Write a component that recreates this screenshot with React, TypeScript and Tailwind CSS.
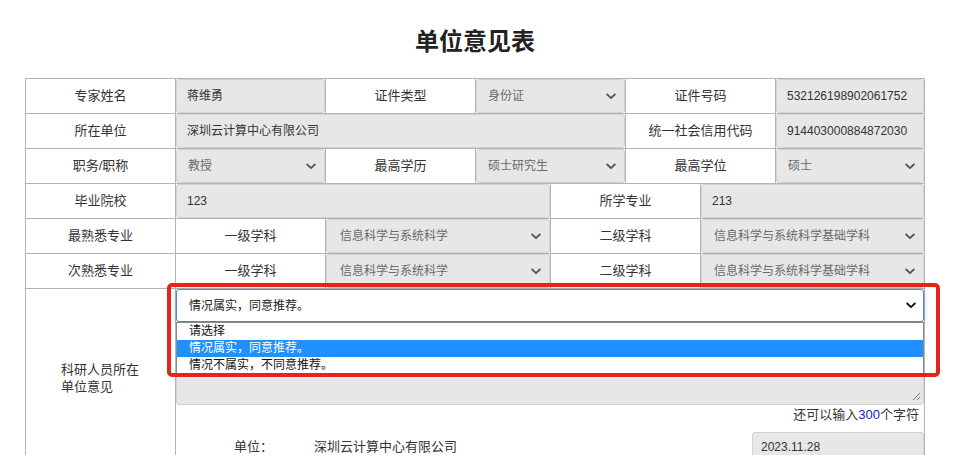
import React from 'react';

const Chevron: React.FC<{ dark?: boolean }> = ({ dark }) => (
  <svg width="10" height="7" viewBox="0 0 10 7" className="shrink-0">
    <path d="M1.2 1.5L5 5.2 8.8 1.5" fill="none" stroke={dark ? '#111' : '#555'} strokeWidth="1.8" strokeLinecap="round" strokeLinejoin="round" />
  </svg>
);

const cellBase = 'border-r border-b border-[#b4b4b4]';

const Label: React.FC<{ text: string; span: string }> = ({ text, span }) => (
  <div className={`${span} ${cellBase} flex items-center justify-center text-[13px] text-[#333]`}>{text}</div>
);

const Input: React.FC<{ value: string; span: string }> = ({ value, span }) => (
  <div className={`${span} ${cellBase}`}>
    <div className="h-full w-full flex items-center rounded-[3px] border border-[#d2d2d2] bg-[#e7e7e7] pl-[10px] text-[12px] text-[#333]">
      {value}
    </div>
  </div>
);

const Select: React.FC<{ value: string; span: string; pad?: string }> = ({ value, span, pad }) => (
  <div className={`${span} ${cellBase}`}>
    <div className={`h-full w-full flex items-center justify-between rounded-[3px] border border-[#d2d2d2] bg-[#e7e7e7] ${pad ?? 'pl-[11px]'} pr-[8px] text-[12px] text-[#6a6a6a]`}>
      <span>{value}</span>
      <Chevron />
    </div>
  </div>
);

const App: React.FC = () => {
  return (
    <div className="min-h-screen bg-white font-['Liberation_Sans','Noto_Sans_CJK_SC',sans-serif] pt-[24px]">
      <div className="ml-[25px] w-[900px]">
        <h1 className="h-[32px] leading-[32px] text-center text-[24px] font-bold text-[#222] font-['Noto_Sans_CJK_SC',sans-serif]">单位意见表</h1>
      </div>

      <div className="ml-[25px] mt-[22px] w-[900px] border-l border-t border-[#b4b4b4] grid grid-cols-[repeat(11,75px)_74px] grid-rows-[repeat(6,35px)_179px]">
        {/* row 1 */}
        <Label span="col-span-2" text="专家姓名" />
        <Input span="col-span-2" value="蒋维勇" />
        <Label span="col-span-2" text="证件类型" />
        <Select span="col-span-2" value="身份证" />
        <Label span="col-span-2" text="证件号码" />
        <Input span="col-span-2" value="532126198902061752" />

        {/* row 2 */}
        <Label span="col-span-2" text="所在单位" />
        <Input span="col-span-6" value="深圳云计算中心有限公司" />
        <Label span="col-span-2" text="统一社会信用代码" />
        <Input span="col-span-2" value="914403000884872030" />

        {/* row 3 */}
        <Label span="col-span-2" text="职务/职称" />
        <Select span="col-span-2" value="教授" />
        <Label span="col-span-2" text="最高学历" />
        <Select span="col-span-2" value="硕士研究生" />
        <Label span="col-span-2" text="最高学位" />
        <Select span="col-span-2" value="硕士" />

        {/* row 4 */}
        <Label span="col-span-2" text="毕业院校" />
        <Input span="col-span-5" value="123" />
        <Label span="col-span-2" text="所学专业" />
        <Input span="col-span-3" value="213" />

        {/* row 5 */}
        <Label span="col-span-2" text="最熟悉专业" />
        <Label span="col-span-2" text="一级学科" />
        <Select span="col-span-3" value="信息科学与系统科学" pad="pl-[13px]" />
        <Label span="col-span-2" text="二级学科" />
        <Select span="col-span-3" value="信息科学与系统科学基础学科" pad="pl-[12px]" />

        {/* row 6 */}
        <Label span="col-span-2" text="次熟悉专业" />
        <Label span="col-span-2" text="一级学科" />
        <Select span="col-span-3" value="信息科学与系统科学" pad="pl-[13px]" />
        <Label span="col-span-2" text="二级学科" />
        <Select span="col-span-3" value="信息科学与系统科学基础学科" pad="pl-[12px]" />

        {/* row 7 */}
        <div className={`col-span-2 ${cellBase} flex items-center pl-[35px] text-[13px] leading-[17px] text-[#333]`}>
          <p>科研人员所在<br />单位意见</p>
        </div>
        <div className={`col-span-10 ${cellBase} relative flex flex-col`}>
          <div className="h-[33px] flex items-center justify-between rounded-[3px] border border-[#5a85b8] bg-white pl-[12px] pr-[7px] text-[12px] text-[#222] shadow-[0_0_5px_rgba(80,130,190,0.45)]">
            <span>情况属实，同意推荐。</span>
            <Chevron dark />
          </div>
          <div className="relative h-[83px] rounded-[3px] border border-[#d2d2d2] bg-[#e6e6e6]">
            <svg width="9" height="9" viewBox="0 0 9 9" className="absolute right-[2px] bottom-[3px]">
              <path d="M8 1L1 8M8 5L5 8" stroke="#777" strokeWidth="1" />
            </svg>
          </div>
          <div className="h-[20px] leading-[20px] text-right pr-[5px] text-[13px] text-[#333]">
            还可以输入<span className="text-[#1a1ac8]">300</span>个字符
          </div>
          <div className="mt-[7px] h-[30px] flex items-center text-[13px] text-[#333]">
            <span className="ml-[58px] w-[80px]">单位：</span>
            <span>深圳云计算中心有限公司</span>
            <div className="ml-auto w-[172px] h-[30px] flex items-center rounded-[3px] border border-[#d2d2d2] bg-[#e7e7e7] pl-[8px] text-[12px] text-[#333]">
              2023.11.28
            </div>
          </div>

          {/* open dropdown list */}
          <div className="absolute left-0 right-0 top-[33px] h-[52px] overflow-hidden border border-[#8a8a8a] bg-white text-[12px] text-[#111]">
            <div className="h-[17px] leading-[17px] pl-[12px]">请选择</div>
            <div className="h-[17px] leading-[17px] pl-[12px] bg-[#1e90ff] text-white">情况属实，同意推荐。</div>
            <div className="h-[17px] leading-[17px] pl-[12px]">情况不属实，不同意推荐。</div>
          </div>

          {/* annotation box */}
          <div className="absolute left-[-9px] top-[-6px] w-[773px] h-[94px] rounded-[5px] border-[4px] border-[#e8231c] pointer-events-none" />
        </div>
      </div>
    </div>
  );
};

export default App;
